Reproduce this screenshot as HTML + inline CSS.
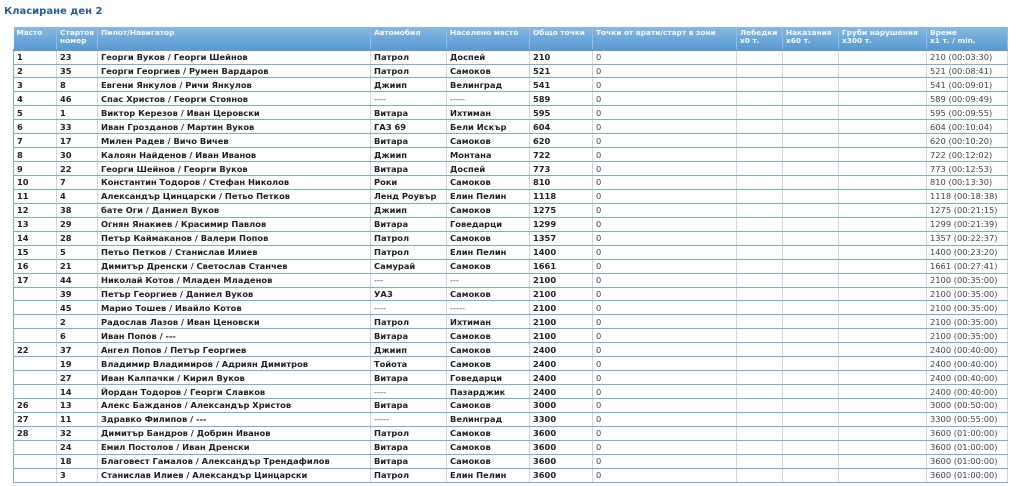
<!DOCTYPE html>
<html><head><meta charset="utf-8"><style>
body{margin:0;background:#fff;width:1024px;height:486px;overflow:hidden;font-family:"DejaVu Sans","Liberation Sans",sans-serif;}
h1{position:absolute;left:4px;top:6px;margin:0;font-size:10px;font-weight:bold;color:#2a5d93;}
table{position:absolute;left:13px;top:27px;border-collapse:collapse;table-layout:fixed;width:994px;height:456px;}
th{background:linear-gradient(#86b9e3,#5a9ad0);color:#f4f8fc;font-size:7.4px;font-weight:bold;text-align:left;vertical-align:top;padding:2px 3px 0;line-height:8px;border-right:1px solid #8fbde3;border-bottom:2px solid #5f9bcf;}
tr{height:13px;}
td{font-size:8.3px;font-weight:bold;color:#222;padding:0 3px;line-height:12px;border-bottom:1px solid #78aedb;border-right:1px solid #d4d4d4;white-space:nowrap;overflow:hidden;}
td:first-child{border-left:1px solid #78aedb;}
td.n{font-weight:normal;color:#444;}
td.t{font-weight:normal;color:#444;}
</style></head><body>
<h1>Класиране ден 2</h1>
<table>
<colgroup><col style="width:43px"><col style="width:41px"><col style="width:273px"><col style="width:76px"><col style="width:83px"><col style="width:63px"><col style="width:144px"><col style="width:46px"><col style="width:56px"><col style="width:88px"><col style="width:81px"></colgroup>
<tr style="height:21px"><th>Място</th><th>Стартов номер</th><th>Пилот/Навигатор</th><th>Автомобил</th><th>Населено място</th><th>Общо точки</th><th>Точки от врати/старт в зони</th><th>Лебедки x0 т.</th><th>Наказания x60 т.</th><th>Груби нарушения x300 т.</th><th>Време<br>x1 т. / min.</th></tr>
<tr><td>1</td><td>23</td><td>Георги Вуков / Георги Шейнов</td><td>Патрол</td><td>Доспей</td><td>210</td><td class="n">0</td><td></td><td></td><td></td><td class="t">210 (00:03:30)</td></tr>
<tr><td>2</td><td>35</td><td>Георги Георгиев / Румен Вардаров</td><td>Патрол</td><td>Самоков</td><td>521</td><td class="n">0</td><td></td><td></td><td></td><td class="t">521 (00:08:41)</td></tr>
<tr><td>3</td><td>8</td><td>Евгени Янкулов / Ричи Янкулов</td><td>Джиип</td><td>Велинград</td><td>541</td><td class="n">0</td><td></td><td></td><td></td><td class="t">541 (00:09:01)</td></tr>
<tr><td>4</td><td>46</td><td>Спас Христов / Георги Стоянов</td><td class="n">----</td><td class="n">-----</td><td>589</td><td class="n">0</td><td></td><td></td><td></td><td class="t">589 (00:09:49)</td></tr>
<tr><td>5</td><td>1</td><td>Виктор Керезов / Иван Церовски</td><td>Витара</td><td>Ихтиман</td><td>595</td><td class="n">0</td><td></td><td></td><td></td><td class="t">595 (00:09:55)</td></tr>
<tr><td>6</td><td>33</td><td>Иван Грозданов / Мартин Вуков</td><td>ГАЗ 69</td><td>Бели Искър</td><td>604</td><td class="n">0</td><td></td><td></td><td></td><td class="t">604 (00:10:04)</td></tr>
<tr><td>7</td><td>17</td><td>Милен Радев / Вичо Вичев</td><td>Витара</td><td>Самоков</td><td>620</td><td class="n">0</td><td></td><td></td><td></td><td class="t">620 (00:10:20)</td></tr>
<tr><td>8</td><td>30</td><td>Калоян Найденов / Иван Иванов</td><td>Джиип</td><td>Монтана</td><td>722</td><td class="n">0</td><td></td><td></td><td></td><td class="t">722 (00:12:02)</td></tr>
<tr><td>9</td><td>22</td><td>Георги Шейнов / Георги Вуков</td><td>Витара</td><td>Доспей</td><td>773</td><td class="n">0</td><td></td><td></td><td></td><td class="t">773 (00:12:53)</td></tr>
<tr><td>10</td><td>7</td><td>Константин Тодоров / Стефан Николов</td><td>Роки</td><td>Самоков</td><td>810</td><td class="n">0</td><td></td><td></td><td></td><td class="t">810 (00:13:30)</td></tr>
<tr><td>11</td><td>4</td><td>Александър Цинцарски / Петьо Петков</td><td>Ленд Роувър</td><td>Елин Пелин</td><td>1118</td><td class="n">0</td><td></td><td></td><td></td><td class="t">1118 (00:18:38)</td></tr>
<tr><td>12</td><td>38</td><td>бате Оги / Даниел Вуков</td><td>Джиип</td><td>Самоков</td><td>1275</td><td class="n">0</td><td></td><td></td><td></td><td class="t">1275 (00:21:15)</td></tr>
<tr><td>13</td><td>29</td><td>Огнян Янакиев / Красимир Павлов</td><td>Витара</td><td>Говедарци</td><td>1299</td><td class="n">0</td><td></td><td></td><td></td><td class="t">1299 (00:21:39)</td></tr>
<tr><td>14</td><td>28</td><td>Петър Каймаканов / Валери Попов</td><td>Патрол</td><td>Самоков</td><td>1357</td><td class="n">0</td><td></td><td></td><td></td><td class="t">1357 (00:22:37)</td></tr>
<tr><td>15</td><td>5</td><td>Петьо Петков / Станислав Илиев</td><td>Патрол</td><td>Елин Пелин</td><td>1400</td><td class="n">0</td><td></td><td></td><td></td><td class="t">1400 (00:23:20)</td></tr>
<tr><td>16</td><td>21</td><td>Димитър Дренски / Светослав Станчев</td><td>Самурай</td><td>Самоков</td><td>1661</td><td class="n">0</td><td></td><td></td><td></td><td class="t">1661 (00:27:41)</td></tr>
<tr><td>17</td><td>44</td><td>Николай Котов / Младен Младенов</td><td class="n">---</td><td class="n">---</td><td>2100</td><td class="n">0</td><td></td><td></td><td></td><td class="t">2100 (00:35:00)</td></tr>
<tr><td></td><td>39</td><td>Петър Георгиев / Даниел Вуков</td><td>УАЗ</td><td>Самоков</td><td>2100</td><td class="n">0</td><td></td><td></td><td></td><td class="t">2100 (00:35:00)</td></tr>
<tr><td></td><td>45</td><td>Марио Тошев / Ивайло Котов</td><td class="n">----</td><td class="n">-----</td><td>2100</td><td class="n">0</td><td></td><td></td><td></td><td class="t">2100 (00:35:00)</td></tr>
<tr><td></td><td>2</td><td>Радослав Лазов / Иван Ценовски</td><td>Патрол</td><td>Ихтиман</td><td>2100</td><td class="n">0</td><td></td><td></td><td></td><td class="t">2100 (00:35:00)</td></tr>
<tr><td></td><td>6</td><td>Иван Попов / ---</td><td>Витара</td><td>Самоков</td><td>2100</td><td class="n">0</td><td></td><td></td><td></td><td class="t">2100 (00:35:00)</td></tr>
<tr><td>22</td><td>37</td><td>Ангел Попов / Петър Георгиев</td><td>Джиип</td><td>Самоков</td><td>2400</td><td class="n">0</td><td></td><td></td><td></td><td class="t">2400 (00:40:00)</td></tr>
<tr><td></td><td>19</td><td>Владимир Владимиров / Адриян Димитров</td><td>Тойота</td><td>Самоков</td><td>2400</td><td class="n">0</td><td></td><td></td><td></td><td class="t">2400 (00:40:00)</td></tr>
<tr><td></td><td>27</td><td>Иван Калпачки / Кирил Вуков</td><td>Витара</td><td>Говедарци</td><td>2400</td><td class="n">0</td><td></td><td></td><td></td><td class="t">2400 (00:40:00)</td></tr>
<tr><td></td><td>14</td><td>Йордан Тодоров / Георги Славков</td><td class="n">----</td><td>Пазарджик</td><td>2400</td><td class="n">0</td><td></td><td></td><td></td><td class="t">2400 (00:40:00)</td></tr>
<tr><td>26</td><td>13</td><td>Алекс Бажданов / Александър Христов</td><td>Витара</td><td>Самоков</td><td>3000</td><td class="n">0</td><td></td><td></td><td></td><td class="t">3000 (00:50:00)</td></tr>
<tr><td>27</td><td>11</td><td>Здравко Филипов / ---</td><td class="n">-----</td><td>Велинград</td><td>3300</td><td class="n">0</td><td></td><td></td><td></td><td class="t">3300 (00:55:00)</td></tr>
<tr><td>28</td><td>32</td><td>Димитър Бандров / Добрин Иванов</td><td>Патрол</td><td>Самоков</td><td>3600</td><td class="n">0</td><td></td><td></td><td></td><td class="t">3600 (01:00:00)</td></tr>
<tr><td></td><td>24</td><td>Емил Постолов / Иван Дренски</td><td>Витара</td><td>Самоков</td><td>3600</td><td class="n">0</td><td></td><td></td><td></td><td class="t">3600 (01:00:00)</td></tr>
<tr><td></td><td>18</td><td>Благовест Гамалов / Александър Трендафилов</td><td>Витара</td><td>Самоков</td><td>3600</td><td class="n">0</td><td></td><td></td><td></td><td class="t">3600 (01:00:00)</td></tr>
<tr><td></td><td>3</td><td>Станислав Илиев / Александър Цинцарски</td><td>Патрол</td><td>Елин Пелин</td><td>3600</td><td class="n">0</td><td></td><td></td><td></td><td class="t">3600 (01:00:00)</td></tr>
</table>
</body></html>
